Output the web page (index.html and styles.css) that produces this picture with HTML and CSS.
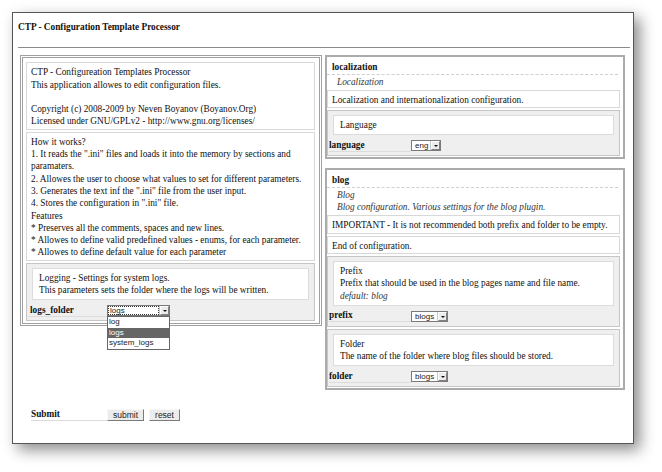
FILE: index.html
```html
<!DOCTYPE html>
<html>
<head>
<meta charset="utf-8">
<title>CTP - Configuration Template Processor</title>
<link rel="stylesheet" href="styles.css">
</head>
<body>
<div class="window">
  <div class="title">CTP - Configuration Template Processor</div>
  <div class="rule"></div>
  <form class="form">
    <div class="columns">
      <div class="col col-left">
        <div class="section section-root">
          <div class="note">CTP - Configureation Templates Processor<br>This application allowes to edit configuration files.<br><br>Copyright (c) 2008-2009 by Neven Boyanov (Boyanov.Org)<br>Licensed under GNU/GPLv2 - http://www.gnu.org/licenses/</div>
          <div class="note">How it works?<br>1. It reads the ".ini" files and loads it into the memory by sections and<br>paramaters.<br>2. Allowes the user to choose what values to set for different parameters.<br>3. Generates the text inf the ".ini" file from the user input.<br>4. Stores the configuration in ".ini" file.<br>Features<br>* Preserves all the comments, spaces and new lines.<br>* Allowes to define valid predefined values - enums, for each parameter.<br>* Allowes to define default value for each parameter</div>
          <div class="param">
            <div class="param-desc">Logging - Settings for system logs.<br>This parameters sets the folder where the logs will be written.</div>
            <div class="param-row">
              <span class="param-label param-label-left">logs_folder</span>
              <span class="select select-lg select-open">
                <span class="select-value"><span class="focus">logs</span></span>
                <span class="select-arrow"></span>
                <span class="dropdown">
                  <span class="option">log</span>
                  <span class="option option-selected">logs</span>
                  <span class="option">system_logs</span>
                </span>
              </span>
            </div>
          </div>
        </div>
      </div>
      <div class="col col-right">
        <div class="section">
          <div class="section-name">localization</div>
          <div class="section-desc">Localization</div>
          <div class="note">Localization and internationalization configuration.</div>
          <div class="param">
            <div class="param-desc">Language</div>
            <div class="param-row">
              <span class="param-label">language</span>
              <span class="select select-sm"><span class="select-value">eng</span><span class="select-arrow"></span></span>
            </div>
          </div>
        </div>
        <div class="section section-spaced">
          <div class="section-name">blog</div>
          <div class="section-desc">Blog<br>Blog configuration. Various settings for the blog plugin.</div>
          <div class="note">IMPORTANT - It is not recommended both prefix and folder to be empty.</div>
          <div class="note">End of configuration.</div>
          <div class="param">
            <div class="param-desc">Prefix<br>Prefix that should be used in the blog pages name and file name.<br><em class="default">default: blog</em></div>
            <div class="param-row">
              <span class="param-label">prefix</span>
              <span class="select select-md"><span class="select-value">blogs</span><span class="select-arrow"></span></span>
            </div>
          </div>
          <div class="param">
            <div class="param-desc">Folder<br>The name of the folder where blog files should be stored.</div>
            <div class="param-row">
              <span class="param-label">folder</span>
              <span class="select select-md"><span class="select-value">blogs</span><span class="select-arrow"></span></span>
            </div>
          </div>
        </div>
      </div>
    </div>
    <div class="submit-row">
      <span class="submit-label">Submit</span>
      <span class="button">submit</span>
      <span class="button">reset</span>
    </div>
  </form>
</div>
</body>
</html>
```
FILE: styles.css
```css
* { box-sizing: border-box; }
html, body { margin: 0; padding: 0; background: #fff; }
body {
  width: 662px;
  height: 472px;
  overflow: hidden;
  font-family: "Liberation Serif", "Times New Roman", serif;
  font-size: 9.3px;
  line-height: 12.3px;
  color: #111;
}
.window {
  margin: 12px 0 0 12px;
  width: 622px;
  height: 432px;
  border: 1px solid #555;
  background: #fff;
  box-shadow: 6px 6px 14px rgba(0, 0, 0, 0.45);
  padding: 0 3px 0 5px;
}
.title {
  padding-top: 8px;
  font-weight: bold;
}
.rule {
  margin-top: 14px;
  height: 1px;
  background: #8a8a8a;
}
.form { margin: 0; }
.columns {
  display: flex;
  align-items: flex-start;
  gap: 3px;
  margin: 7px 0 0 2px;
}
.col-left { width: 302px; }
.col-right { width: 300px; }
.section {
  border: 2px solid #ababab;
  padding: 0 3px 1px 0;
}
.section-root {
  border: 3px double #a0a0a0;
  padding: 4px 4px 2px 3px;
}
.section-spaced { margin-top: 9px; }
.section-name {
  padding: 4px 0 0 5px;
  font-weight: bold;
  border-bottom: 1px dashed #cfcfcf;
  margin-right: 2px;
}
.section-desc {
  margin-top: 1px;
  padding-left: 10px;
  font-style: italic;
  color: #333;
}
.note {
  margin-top: 2px;
  border: 1px solid #d8d8d8;
  padding: 3px 5px 1px 4px;
  background: #fff;
}
.section-root .note:first-child { margin-top: 0; }
.param {
  margin-top: 2px;
  background: #efefef;
  border: 1px solid #c6c6c6;
  padding: 4px 5px 3px 1px;
}
.param-desc {
  margin-left: 4px;
  background: #fff;
  border: 1px solid #dcdcdc;
  padding: 3px 6px;
}
.default { color: #333; }
.param-row {
  display: flex;
  align-items: center;
  height: 13px;
  margin-top: 4px;
}
.param-label {
  width: 82px;
  flex: none;
  font-weight: bold;
  line-height: 11px;
  border-bottom: 1px solid #dcdcdc;
}
.param-label-left { width: 79px; padding-left: 2px; }
.select {
  position: relative;
  display: inline-flex;
  align-items: center;
  height: 11px;
  border: 1px solid #7a7a7a;
  background: #fff;
  font-family: "Liberation Sans", Arial, sans-serif;
  font-size: 8px;
  line-height: 9px;
  color: #222;
}
.select-sm { width: 30px; }
.select-md { width: 37px; }
.select-lg { width: 63px; }
.select-value {
  flex: 1;
  padding-left: 3px;
  white-space: nowrap;
}
.select-lg .select-value { padding-left: 0; height: 9px; display: flex; }
.focus {
  flex: 1;
  border: 1px dotted #333;
  padding-left: 1px;
  line-height: 7px;
  margin-right: 1px;
}
.select-arrow {
  position: relative;
  flex: none;
  width: 9px;
  height: 9px;
  background: #ececec;
  border: 1px solid;
  border-color: #fff #808080 #808080 #fff;
  box-shadow: -1px 0 0 #c8c8c8;
}
.select-arrow::after {
  content: "";
  position: absolute;
  left: 2px;
  top: 3px;
  border-left: 2px solid transparent;
  border-right: 2px solid transparent;
  border-top: 2px solid #111;
}
.dropdown {
  position: absolute;
  left: -1px;
  top: 10px;
  width: 63px;
  border: 1px solid #666;
  background: #fff;
  display: flex;
  flex-direction: column;
  z-index: 2;
}
.option {
  height: 10.5px;
  line-height: 10.5px;
  padding-left: 1px;
}
.option-selected {
  background: #666;
  color: #fff;
}
.submit-row {
  display: flex;
  align-items: center;
  margin: 18px 0 0 13px;
  height: 13px;
}
.submit-label {
  width: 76px;
  font-weight: bold;
  line-height: 11px;
  border-bottom: 1px solid #dcdcdc;
}
.button {
  height: 12px;
  margin-right: 5px;
  padding: 0 5px;
  font-family: "Liberation Sans", Arial, sans-serif;
  font-size: 8.5px;
  line-height: 10px;
  color: #222;
  background: #ececec;
  border: 1px solid;
  border-color: #f8f8f8 #7a7a7a #7a7a7a #f8f8f8;
}
```
